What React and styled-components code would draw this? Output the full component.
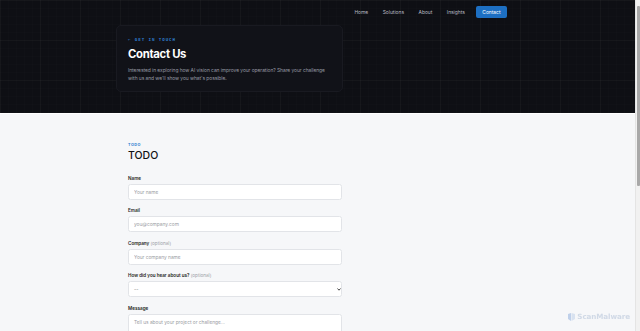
import React from "react";
import styled, { createGlobalStyle } from "styled-components";

const Global = createGlobalStyle`
  body {
    margin: 0;
    background: #f6f7f9;
    font-family: Inter, "Noto Sans", sans-serif;
    -webkit-font-smoothing: antialiased;
  }
  * { box-sizing: border-box; }
`;

const Hero = styled.header`
  background-color: #0e0f14;
  background-image:
    linear-gradient(to right, rgba(255,255,255,0.022) 1px, transparent 1px),
    linear-gradient(to bottom, rgba(255,255,255,0.022) 1px, transparent 1px),
    linear-gradient(to right, rgba(255,255,255,0.008) 1px, transparent 1px),
    linear-gradient(to bottom, rgba(255,255,255,0.008) 1px, transparent 1px);
  background-size: 40px 40px, 40px 40px, 8px 8px, 8px 8px;
  border-bottom: 1px solid #ffffff;
  height: 114px;
  display: flex;
  flex-direction: column;
`;

const Nav = styled.nav`
  display: flex;
  justify-content: flex-end;
  align-items: center;
  padding: 6px 133px 0 0;
  height: 18px;
`;

const NavLink = styled.a`
  font-size: 4.9px;
  color: ${p => (p.$active ? "#ffffff" : "#b9bcc4")};
  background: ${p => (p.$active ? "#1d6fc2" : "transparent")};
  border-radius: 2px;
  padding: 0 ${p => (p.$active ? "6.5px" : "0")};
  height: 12px;
  display: flex;
  align-items: center;
  margin-left: ${p => (p.$active ? "11px" : "14.5px")};
  text-decoration: none;
`;

const HeroInner = styled.div`
  padding: 7px 0 0 116px;
`;

const HeroCard = styled.div`
  width: 227px;
  background: #111218;
  border: 1px solid #191a21;
  border-radius: 5px;
  padding: 11px 11px 9px 11px;
`;

const Eyebrow = styled.div`
  font-family: "DejaVu Sans Mono", "Liberation Mono", monospace;
  font-size: 4.2px;
  letter-spacing: 0.9px;
  color: #2f7fd0;
  font-weight: bold;
  line-height: 6px;
`;

const Title = styled.h1`
  margin: 3px 0 4px;
  font-size: 11.3px;
  font-weight: 700;
  letter-spacing: -0.3px;
  color: #ffffff;
  line-height: 16px;
`;

const Lead = styled.p`
  margin: 0;
  max-width: 203px;
  font-size: 4.9px;
  line-height: 8.2px;
  color: #9699a3;
  letter-spacing: -0.05px;
`;

const Main = styled.main`
  padding: 28px 0 60px 128px;
`;

const Form = styled.form`
  width: 214px;
  display: flex;
  flex-direction: column;
`;

const SmallTag = styled.div`
  font-size: 3.8px;
  font-weight: 700;
  letter-spacing: 0.5px;
  color: #2f7fd0;
  line-height: 5px;
`;

const Heading = styled.h2`
  margin: 2px 0 13px;
  font-size: 10.5px;
  font-weight: 500;
  color: #111214;
  line-height: 14px;
`;

const Field = styled.div`
  display: flex;
  flex-direction: column;
  margin-bottom: 8.3px;
`;

const Label = styled.label`
  font-size: 4.6px;
  font-weight: 600;
  color: #1d1e22;
  line-height: 6px;
  margin-bottom: 2px;
`;

const Optional = styled.span`
  font-weight: 400;
  color: #9b9ea6;
`;

const Input = styled.input`
  width: 100%;
  height: 16px;
  background: #ffffff;
  border: 1px solid #e2e4e8;
  border-radius: 2.5px;
  padding: 0 5px;
  font-family: inherit;
  font-size: 4.8px;
  color: #333;
  outline: none;
  &::placeholder { color: #9a9ca3; }
`;

const SelectBox = styled.div`
  position: relative;
  width: 100%;
  height: 16.5px;
  background: #ffffff;
  border: 1px solid #e2e4e8;
  border-radius: 2.5px;
  padding: 0 5px;
  display: flex;
  align-items: center;
  font-size: 4.8px;
  color: #666;
`;

const Caret = styled.svg`
  position: absolute;
  right: 0.5px;
  top: 6.5px;
`;

const TextArea = styled.textarea`
  width: 100%;
  height: 50px;
  background: #ffffff;
  border: 1px solid #e2e4e8;
  border-radius: 2.5px;
  padding: 4px 5px;
  font-family: inherit;
  font-size: 4.8px;
  resize: none;
  outline: none;
  &::placeholder { color: #9a9ca3; }
`;

const Watermark = styled.div`
  position: fixed;
  right: 10px;
  bottom: 10px;
  display: flex;
  align-items: center;
  gap: 2px;
  font-family: "DejaVu Sans", sans-serif;
  font-size: 7.2px;
  font-weight: bold;
  color: #d0d9e6;
  letter-spacing: -0.1px;
`;

const ScrollTrack = styled.div`
  position: fixed;
  top: 0;
  right: 0;
  bottom: 0;
  width: 5px;
  background: #f1f1f1;
  border-left: 1px solid #e4e4e4;
`;

const ScrollThumb = styled.div`
  position: absolute;
  top: 6px;
  left: 1px;
  width: 3px;
  height: 180px;
  background: #a8a8a8;
  border-radius: 1px;
`;

export default function App() {
  return (
    <>
      <Global />
      <Hero>
        <Nav>
          <NavLink>Home</NavLink>
          <NavLink>Solutions</NavLink>
          <NavLink>About</NavLink>
          <NavLink>Insights</NavLink>
          <NavLink $active>Contact</NavLink>
        </Nav>
        <HeroInner>
          <HeroCard>
            <Eyebrow>← GET IN TOUCH</Eyebrow>
            <Title>Contact Us</Title>
            <Lead>
              Interested in exploring how AI vision can improve your operation? Share your challenge
              with us and we'll show you what's possible.
            </Lead>
          </HeroCard>
        </HeroInner>
      </Hero>
      <Main>
        <Form>
          <SmallTag>TODO</SmallTag>
          <Heading>TODO</Heading>
          <Field>
            <Label>Name</Label>
            <Input placeholder="Your name" />
          </Field>
          <Field>
            <Label>Email</Label>
            <Input placeholder="you@company.com" />
          </Field>
          <Field>
            <Label>
              Company <Optional>(optional)</Optional>
            </Label>
            <Input placeholder="Your company name" />
          </Field>
          <Field>
            <Label>
              How did you hear about us? <Optional>(optional)</Optional>
            </Label>
            <SelectBox>
              --
              <Caret width="4" height="3" viewBox="0 0 4 3">
                <path d="M0.5 0.5 L2 2.2 L3.5 0.5" fill="none" stroke="#333" strokeWidth="0.9" />
              </Caret>
            </SelectBox>
          </Field>
          <Field>
            <Label>Message</Label>
            <TextArea placeholder="Tell us about your project or challenge..." />
          </Field>
        </Form>
      </Main>
      <Watermark>
        <svg width="7" height="8" viewBox="0 0 7 8">
          <path d="M0 1 L3 0 L3 8 L0 6 Z" fill="#bfd0ea" />
          <path d="M3.5 0 L7 1 L7 6 L3.5 8 Z" fill="#d8e2f0" />
        </svg>
        ScanMalware
      </Watermark>
      <ScrollTrack>
        <ScrollThumb />
      </ScrollTrack>
    </>
  );
}
